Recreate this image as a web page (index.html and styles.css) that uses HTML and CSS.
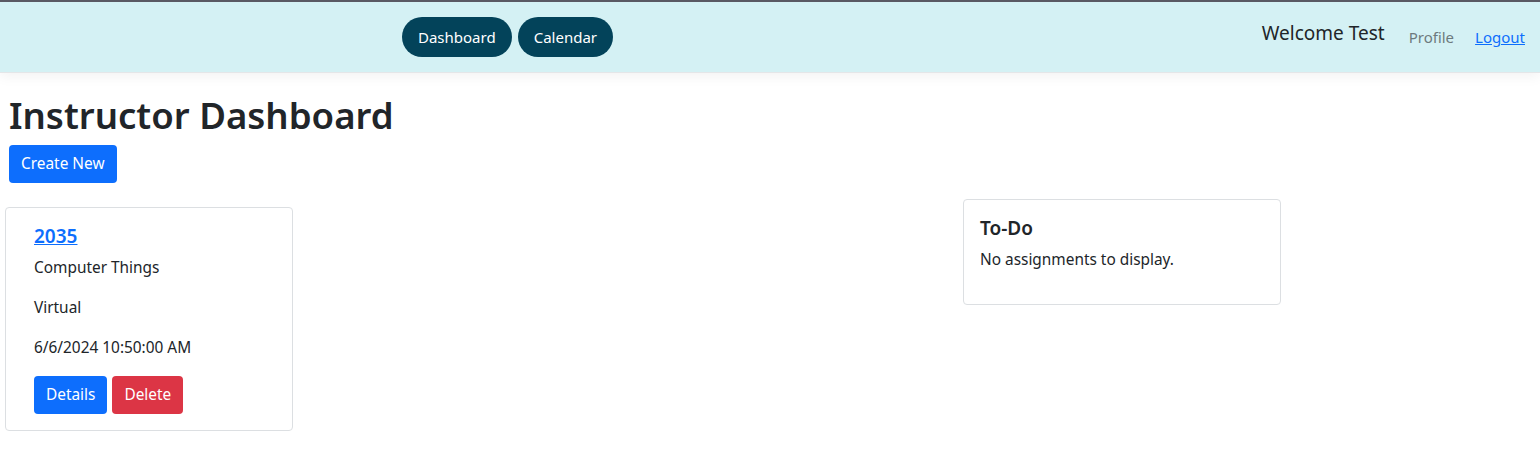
FILE: index.html
```html
<!DOCTYPE html>
<html lang="en">
<head>
  <meta charset="UTF-8" />
  <title>Instructor Dashboard</title>
  <link rel="stylesheet" href="styles.css">
</head>
<body>
  <header class="topbar">
    <nav class="pills">
      <a href="#" class="pill">Dashboard</a>
      <a href="#" class="pill">Calendar</a>
    </nav>
    <div class="user">
      <span class="welcome">Welcome Test</span>
      <a href="#" class="profile">Profile</a>
      <a href="#" class="logout">Logout</a>
    </div>
  </header>

  <main>
    <h1>Instructor Dashboard</h1>
    <a href="#" class="btn btn-blue">Create New</a>

    <div class="row">
      <div class="card course">
        <h5><a href="#">2035</a></h5>
        <p>Computer Things</p>
        <p>Virtual</p>
        <p>6/6/2024 10:50:00 AM</p>
        <div class="actions">
          <a href="#" class="btn btn-blue">Details</a>
          <a href="#" class="btn btn-red">Delete</a>
        </div>
      </div>

      <div class="card todo">
        <h5>To-Do</h5>
        <p>No assignments to display.</p>
      </div>
    </div>
  </main>
</body>
</html>
```

FILE: styles.css
```css
body {
  margin: 0;
  font-family: 'Noto Sans', 'Open Sans', sans-serif;
  font-size: 15.4px;
  line-height: 24px;
  color: #212529;
  background: #fff;
  border-top: 2px solid #595963;
}

.topbar {
  height: 70px;
  font-size: 15px;
  background: #d4f1f4;
  border-bottom: 1px solid #e4e6e8;
  box-shadow: 0 4px 12px rgba(0, 0, 0, 0.05);
  display: flex;
  align-items: center;
  justify-content: space-between;
  padding: 0 15px 0 402px;
}

.pills {
  display: flex;
  gap: 6px;
}

.pill {
  display: block;
  height: 40px;
  line-height: 40px;
  padding: 0 16px;
  border-radius: 20px;
  background: #03435a;
  color: #fff;
  text-decoration: none;
}

.user {
  display: flex;
  align-items: center;
}

.welcome {
  font-size: 19px;
  margin-top: -8px;
  margin-right: 24px;
}

.profile {
  color: #6d7a7d;
  text-decoration: none;
  margin-right: 21px;
}

.logout {
  color: #0d6efd;
}

main {
  padding: 18px 9px 0;
}

h1 {
  margin: 0 0 6px;
  font-size: 36.6px;
  line-height: 48px;
  font-weight: 600;
}

.btn {
  display: inline-block;
  height: 38px;
  line-height: 38px;
  padding: 0 12px;
  border-radius: 4px;
  color: #fff;
  text-decoration: none;
}

.btn-blue { background: #0d6efd; }
.btn-red { background: #dc3545; }

.row {
  display: flex;
  align-items: flex-start;
  gap: 670px;
  margin-left: -4px;
}

.card {
  border: 1px solid #dcdfe2;
  border-radius: 4px;
  padding: 16px 28px;
  box-sizing: border-box;
}

.card h5 {
  margin: 0 0 8px;
  font-size: 19px;
  line-height: 24px;
  font-weight: 600;
}

.card p {
  margin: 0 0 16px;
}

.course {
  width: 288px;
  margin-top: 24px;
}

.course h5 a {
  color: #0d6efd;
}

.actions {
  display: flex;
  gap: 5px;
}

.todo {
  width: 318px;
  margin-top: 16px;
  padding: 16px;
}
```
